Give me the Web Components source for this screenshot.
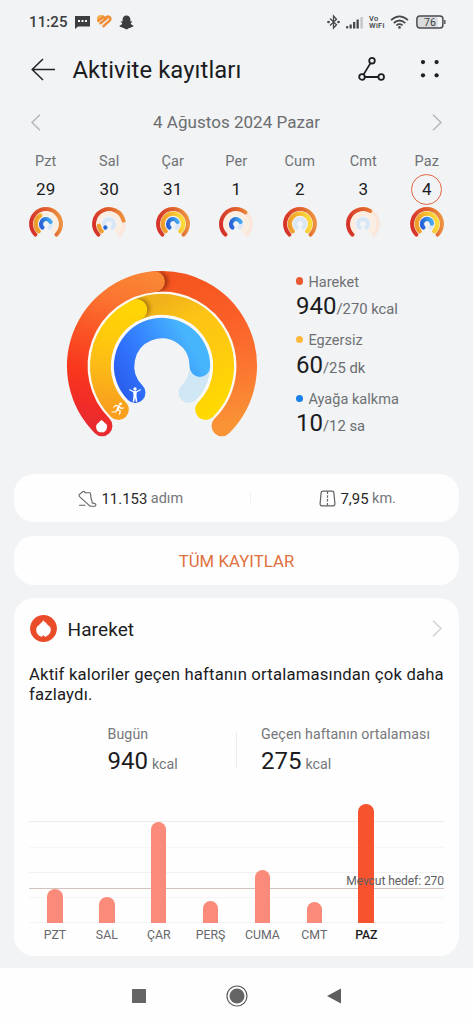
<!DOCTYPE html>
<html lang="tr">
<head>
<meta charset="utf-8">
<title>Aktivite kayıtları</title>
<style>
html,body{margin:0;height:100%}
body{font-family:Roboto,"Open Sans",sans-serif;color:#1b1c1e;background:#f1f3f5;width:473px;height:1024px;overflow:hidden}
</style>
</head>
<body>
<activity-app></activity-app>
<script>
const define=(name,render)=>customElements.define(name,class extends HTMLElement{
  connectedCallback(){
    if(this.shadowRoot)return;
    const t=document.createElement('template');
    t.innerHTML='<style>*{box-sizing:border-box}svg{display:block;flex:none}</style>'+render(this);
    this.attachShadow({mode:'open'}).append(t.content.cloneNode(true));
  }
});

/* Arc drawing: angles in degrees, clockwise from the positive x axis */
const START=135,END=405;
const pt=(c,r,a)=>[c+r*Math.cos(a*Math.PI/180),c+r*Math.sin(a*Math.PI/180)].map(n=>n.toFixed(2)).join(' ');
const arc=(c,r,a,b)=>`M${pt(c,r,a)}A${r} ${r} 0 ${b-a>180?1:0} 1 ${pt(c,r,b)}`;
const stroke=(c,r,a,b,w,col)=>`<path d="${arc(c,r,a,b)}" stroke="${col}" stroke-width="${w}" stroke-linecap="round"/>`;
const grad=(id,[x1,y1,x2,y2],stops)=>`<linearGradient id="${id}" gradientUnits="userSpaceOnUse" x1="${x1}" y1="${y1}" x2="${x2}" y2="${y2}">${stops.map(([o,c])=>`<stop offset="${o}" stop-color="${c}"/>`).join('')}</linearGradient>`;

define('status-bar',()=>`<style>
:host{display:flex;height:44px;padding:0 27px 0 29px;align-items:center;color:#3b3d40}
.t{font-size:15px;font-weight:500;letter-spacing:.1px;width:46px}
.sp{flex:1}.vo{font-size:7.500px;line-height:7px;font-weight:500;letter-spacing:.3px;width:17px;margin:0 4px 0 5px}
</style><span class="t">11:25</span>
<svg width="15" height="14" viewBox="0 0 15 14"><path d="M0 1h15v10.500H3L0 14z" fill="#3b3d40"/><path d="M3 5h2v2H3zM6.500 5h2v2h-2zM10 5h2v2h-2z" fill="#fff"/></svg>
<svg style="margin-left:7px" width="15" height="14" viewBox="0 0 15 14" fill="none" stroke-linecap="round"><path d="M6.800 2.600Q4 -.2 1.700 2.300T1.500 6" stroke="#f3b04f" stroke-width="2.600"/><path d="M1.800 5.200 6.600 1.900M3.500 8.300 10 3M6.500 11.200l5.800-5.400Q14.500 3.500 12.300 2T8.200 3.600" stroke="#f08c35" stroke-width="2.500"/></svg>
<svg style="margin-left:7px" width="15" height="15" viewBox="0 0 15 15" fill="#3b3d40"><path d="M7.500.5C10 .5 11.400 2.200 11.400 4.600v1.800l1.600-.1c.6.600-.2 1.300-1.300 1.700.4 1.300 1.400 2.300 2.800 2.800.1.900-1 1.200-2.200 1.300-.4 1.100-1.200.9-2.300.8-.8.700-1.600 1.300-2.500 1.300s-1.700-.6-2.500-1.300c-1.100.1-1.900.3-2.300-.8C1.500 12 .4 11.700.5 10.800 1.900 10.300 2.900 9.300 3.300 8 2.200 7.600 1.400 6.900 2 6.300l1.600.1V4.600C3.600 2.200 5 .5 7.500.5z"/></svg>
<span class="sp"></span>
<svg width="13" height="16" viewBox="0 0 13 16" fill="none" stroke="#47494c" stroke-width="1.300"><path d="M3 4.500l6.500 6.300L6.500 14V2l3 3.200L3 11.500"/><circle cx="1.500" cy="8" r=".7" fill="#47494c"/><circle cx="11.500" cy="8" r=".7" fill="#47494c"/></svg>
<svg style="margin-left:5px" width="19" height="13" viewBox="0 0 19 13" fill="#47494c"><rect x="1" y="10" width="2.300" height="2.500" rx="1"/><rect x="4.500" y="8.500" width="2.300" height="4"/><rect x="8" y="6" width="2.300" height="6.500"/><rect x="11.500" y="3.500" width="2.300" height="9"/><rect x="15.300" y="1" width="2.600" height="11.500" fill="#c6c8ca"/></svg>
<span class="vo">Vo<br>WiFi</span>
<svg width="19" height="14" viewBox="0 0 19 14" fill="none" stroke="#47494c" stroke-width="1.700"><path d="M1 5.200Q9.500-2.600 18 5.200M3.800 8q5.700-5 11.400 0M6.400 10.400q3.100-2.500 6.200 0"/><circle cx="9.500" cy="12.400" r="1.300" fill="#47494c" stroke="none"/></svg>
<svg style="margin:0 -1px 0 7px" width="31" height="14" viewBox="0 0 31 14"><rect x="1.500" y="1.500" width="20" height="11" fill="#d9dbdd"/><rect x=".9" y=".9" width="26" height="12.200" rx="3" fill="none" stroke="#47494c" stroke-width="1.500"/><path d="M28.200 5h1.300v4h-1.300z" fill="#47494c"/><text x="13.900" y="10.800" font-size="10.500" text-anchor="middle" fill="#3b3d40">76</text></svg>`);

define('title-bar',()=>`<style>
:host{display:flex;height:52px;align-items:center;padding:0 33px 0 31px}
h1{margin:0 0 0 17px;font-size:23.800px;font-weight:400;flex:1;line-height:28px;letter-spacing:.1px}
</style>
<svg width="24.500" height="24" viewBox="0 0 24.500 24" fill="none" stroke="#222" stroke-width="1.500"><path d="M24 11.500H1M12 1 1.200 11.500 12 22" /></svg>
<h1><slot></slot></h1>
<svg style="margin-right:2px" width="28" height="26" viewBox="0 0 28 26" fill="none" stroke="#1d1f21" stroke-width="1.800"><circle cx="15" cy="3.700" r="2.800"/><circle cx="5" cy="20" r="2.800"/><circle cx="24.200" cy="20" r="2.800"/><path d="M13.500 6.100 6.500 17.600M7.800 20h13.600"/></svg>
<svg style="margin-left:33px" width="20" height="20" viewBox="0 0 20 20" fill="#1d1f21"><circle cx="3" cy="2.100" r="2.100"/><circle cx="16.600" cy="2.100" r="2.100"/><circle cx="3" cy="15.300" r="2.100"/><circle cx="16.600" cy="15.300" r="2.100"/></svg>`);

define('chevron-icon',e=>`<style>:host{display:block}</style><svg width="10" height="17" viewBox="0 0 10 17" fill="none" stroke="${e.getAttribute('color')||'#b4b6b8'}" stroke-width="1.500"><path d="${e.hasAttribute('left')?'M9 .8 1 8.500l8 7.700':'M1 .8l8 7.700-8 7.700'}"/></svg>`);

define('date-picker',()=>`<style>
:host{display:flex;height:52px;align-items:center;justify-content:space-between;padding:0 31px}
span{font-size:17px;color:#6b6d70;letter-spacing:.03px}
</style><chevron-icon left></chevron-icon><span><slot></slot></span><chevron-icon></chevron-icon>`);

/* outer / mid / inner hold the end angle of each arc, 0 for none */
define('mini-rings',e=>{
  const g=n=>+e.getAttribute(n);
  const S=[['a',14.900,'#fae7da',[[0,'#d4302a'],[.35,'#dc4d2c'],[.7,'#e2672f'],[1,'#ec9040']],g('outer'),4],
           ['b',10.300,'#fbeee0',[[0,'#ef9a2c'],[.5,'#f5b62c'],[1,'#fadb3a']],g('mid'),4.300],
           ['c',5,'#d9e6f5',[[0,'#2c5fd8'],[.5,'#2f83dc'],[1,'#45a6ee']],g('inner'),4.200]];
  return `<style>:host{display:block}</style><svg width="34" height="34" viewBox="0 0 34 34" fill="none"><defs>${S.map(([id,r,,st])=>grad(id,[17-r,17+r*.4,17+r,17],st)).join('')}</defs>`+
    S.map(([id,r,bg,st,end,w])=>stroke(17,r,START,END,w,bg)+(end?stroke(17,r,START,end,w,`url(#${id})`):'')).join('')+`</svg>`;
});

define('week-day',e=>`<style>
:host{display:flex;flex-direction:column;align-items:center}
.d{font-size:14.500px;line-height:18px;color:#6f7174;letter-spacing:.1px}
.n{font-size:17px;width:31px;height:31px;margin:2.500px 0 2.500px;display:flex;align-items:center;justify-content:center;border-radius:50%;border:1.500px solid transparent;letter-spacing:.1px}
:host([selected]) .n{border-color:#e2683f}
</style><span class="d">${e.getAttribute('day')}</span><span class="n">${e.getAttribute('num')}</span>
<mini-rings outer="${e.getAttribute('o')}" mid="${e.getAttribute('m')}" inner="${e.getAttribute('i')}"></mini-rings>`);

define('week-strip',()=>`<style>
:host{display:grid;grid-template-columns:repeat(7,63.500px);padding:5px 0 0 14px;height:113px}
</style>
<week-day day="Pzt" num="29" o="405" m="236" i="335"></week-day>
<week-day day="Sal" num="30" o="347" m="170" i="136"></week-day>
<week-day day="Çar" num="31" o="405" m="405" i="335"></week-day>
<week-day day="Per" num="1" o="309" m="0" i="335"></week-day>
<week-day day="Cum" num="2" o="405" m="405" i="0"></week-day>
<week-day day="Cmt" num="3" o="299" m="0" i="0"></week-day>
<week-day day="Paz" num="4" selected o="405" m="405" i="355"></week-day>`);

define('activity-rings',()=>{
  const c=100;
  const band=(id,ro,ri)=>`<clipPath id="${id}"><path clip-rule="evenodd" d="M${c-ro} ${c}a${ro} ${ro} 0 0 1 ${2*ro} 0zM${c-ri} ${c}a${ri} ${ri} 0 0 1 ${2*ri} 0z"/></clipPath>`;
  const shade=(r,a,col,clip)=>{const [x,y]=pt(c,r,a).split(' ');return `<g clip-path="url(#${clip})"><circle cx="${x}" cy="${y}" r="10" fill="${col}" filter="url(#sh)"/></g>`};
  return `<style>:host{display:block}</style>
<svg width="200" height="200" viewBox="0 0 200 200" fill="none">
<defs><filter id="sh" x="-50%" y="-50%" width="200%" height="200%"><feGaussianBlur stdDeviation="2"/></filter>
${band('o',95,74.4)}${band('m',72,51.2)}
${grad('or',[110,8,150,165],[[0,'#f4541f'],[.35,'#fb5f28'],[.7,'#fb7831'],[1,'#f99436']])}
${grad('ol',[92,10,40,165],[[0,'#f98735'],[.22,'#fb7430'],[.45,'#fa5425'],[.7,'#f8361d'],[.88,'#f02c28'],[1,'#e72a30']])}
${grad('mr',[90,40,150,145],[[0,'#f0b21a'],[.25,'#fcc415'],[.6,'#fecb0e'],[1,'#ffd900']])}
${grad('ml',[80,42,60,145],[[0,'#ffd604'],[.35,'#fec90c'],[.6,'#fcbb16'],[1,'#f99f1e']])}
${grad('in',[66,130,136,90],[[0,'#2b61ee'],[.25,'#2f70fb'],[.6,'#388eff'],[1,'#47b5fc']])}
</defs>
<path d="${arc(c,73.200,START,END)}" stroke="#fdf8f0" stroke-width="3"/><path d="${arc(c,49.600,START,END)}" stroke="#fbfaf5" stroke-width="3.500"/>
${stroke(c,84.700,262,END,20.600,'url(#or)')}
${shade(84.700,267.5,'#a3320f','o')}
${stroke(c,84.700,START,265,20.600,'url(#ol)')}
${stroke(c,61.600,244,END,20.800,'url(#mr)')}
${shade(61.600,249,'#a9770c','m')}
${stroke(c,61.600,START,246,20.800,'url(#ml)')}
${stroke(c,37.900,340,END,20.500,'#d0e7f5')}
${stroke(c,37.900,START,361,20.500,'url(#in)')}
<path fill="#fff" d="M39.500 153.800c1 1.600 2.400 1.700 3 2.900 1.700.7 2.600 2 2.600 3.900 0 2.600-1.400 4.600-3.400 5.600l-1.700.2-.5-1-.6 1-1.800-.3c-1.800-1-3-2.900-3-5.300 0-1.900.9-3.300 2.400-3.900.6-1.400 2.100-1.600 3-3.100z"/>
<circle cx="73" cy="123" r="1.700" fill="#fff"/><path d="M67.800 123.800l3.600 2h3.200l3.800-2" stroke="#fff" stroke-width="1.200" stroke-linecap="round" stroke-linejoin="round"/><path d="M71.200 125.200h3.600l-.3 4.800.8 5.800h-1.500l-.8-4.300-.8 4.300h-1.500l.8-5.800z" fill="#fff"/>
<circle cx="58.500" cy="137.800" r="1.400" fill="#fff"/><path d="M57 140.300l-1.500 3.300" stroke="#fff" stroke-width="2.200" stroke-linecap="round"/><path d="M57 140l-3.200-.6-2 1.700M55.500 143.500l2.800 1.600-.7 3M55.200 144l-1.600 1.900-3.600.1M57.300 140.500l1.800 2 2.200-.6" stroke="#fff" stroke-width="1.200" stroke-linecap="round" stroke-linejoin="round"/>
</svg>`});

define('ring-stat',e=>`<style>
:host{display:block;height:58.700px}
.l{display:flex;align-items:center;height:20px;font-size:14.500px;color:#6f7174;letter-spacing:.03px}
.l i{width:7.400px;height:7.400px;border-radius:50%;background:${e.getAttribute('color')};margin-right:5px;position:relative;top:-1px}
.v{font-size:24px;line-height:28px;white-space:nowrap}
.v small{font-size:14.800px;color:#6b6d70;letter-spacing:0}
</style><div class="l"><i></i>${e.getAttribute('label')}</div><div class="v">${e.getAttribute('value')}<small>/<slot></slot></small></div>`);

define('activity-summary',()=>`<style>
:host{display:flex;height:213px;padding:5px 0 0 62px}
.s{padding-top:6px;margin-left:34px}
</style><activity-rings></activity-rings><div class="s">
<ring-stat color="#e95a33" label="Hareket" value="940">270 kcal</ring-stat>
<ring-stat color="#fbb83a" label="Egzersiz" value="60">25 dk</ring-stat>
<ring-stat color="#1880e6" label="Ayağa kalkma" value="10">12 sa</ring-stat></div>`);

define('app-card',()=>`<style>:host{display:block;background:#fefefe;border-radius:20px;margin:0 14px}</style><slot></slot>`);

define('step-totals',()=>`<style>
:host{display:flex;height:48px;align-items:center}
div{display:flex;align-items:center;font-size:14.900px;color:#26282a;flex:none;padding-top:1px}
.steps{padding-left:64px;width:236px}.km{padding-left:68px}
small{font-size:14.500px;color:#747679;margin-left:3.500px}
i{width:1px;height:11px;background:#f1f1f2}
svg{margin-right:4.500px}
</style>
<div class="steps"><svg width="19" height="18" viewBox="0 0 19 18" fill="none" stroke="#5f6164" stroke-width="1.100" stroke-linejoin="round" stroke-linecap="round"><path d="M1.300 6.300c-.6-.9-.2-1.500.5-2.100L5 1.500c1-.7 1.500.1 1.900.9.700.8 1.500.3 2.500.3h2.300c1 .2 1 1.300 1 2.200 0 2.500.3 4.600 1.300 6.100.2.700-.2 1.200.2 1.900l3 .9c1 .6.900 2.300-.4 2.500h-3.600c-1.200-.1-2-.9-2.900-1.700z"/><path d="M1.500 15.300h5.500"/></svg><span>11.153</span><small>adım</small></div><i></i>
<div class="km"><svg width="17" height="17" viewBox="0 0 17 17" fill="none" stroke="#5f6164" stroke-width="1.200"><path d="M4 1.200h9c1.200 0 1.800.6 1.900 1.700l1 10.700c.1 1.500-.7 2.200-1.900 2.200H3c-1.200 0-2-.7-1.900-2.200l1-10.700c.1-1.100.7-1.700 1.900-1.700z"/><path d="M8.500 1.500v14" stroke-dasharray="2.500 1.300"/></svg><span>7,95</span><small>km.</small></div>`);

define('all-records',()=>`<style>:host{display:flex;height:49px;align-items:center;justify-content:center;font-size:16.700px;letter-spacing:.08px;color:#e0703d;padding-top:2px}</style><slot></slot>`);

define('card-head',()=>`<style>
:host{display:flex;align-items:center;height:60px;padding:0 17px 0 15.500px}
h2{margin:2px 0 0 11px;font-size:19px;font-weight:400;flex:1;letter-spacing:.1px}
</style><svg width="27" height="27" viewBox="0 0 27 27"><circle cx="13.500" cy="13.500" r="13.400" fill="#ea4c2a"/><path d="M13.300 5.200c1.700 2.600 3.600 2.800 4.400 4.700 2.200 1 3.200 2.800 3.100 5.200-.2 3-2 5.300-4.800 6.400-.8.300-1.400.2-1.700-.3l-.9-1.300-.9 1.300c-.3.500-.9.600-1.700.2-2.700-1.100-4.500-3.300-4.600-6.200-.1-2.500 1-4.200 2.700-5 1-2 3.200-2.500 4.400-5z" fill="#fff"/></svg>
<h2><slot></slot></h2><chevron-icon color="#cfd0d2"></chevron-icon>`);

define('kcal-value',e=>`<style>
:host{display:block}.l{font-size:14.200px;line-height:20px;color:#75777a;letter-spacing:.09px;white-space:nowrap}
.v{font-size:24px;line-height:28px;margin-top:3px}.v small{font-size:14.300px;color:#75777a;margin-left:4px;letter-spacing:0}
</style><div class="l"><slot></slot></div><div class="v">${e.getAttribute('value')}<small>kcal</small></div>`);

define('week-chart',()=>{
  const bars=[['PZT',34.500],['SAL',26.500],['ÇAR',101.300],['PERŞ',22],['CUMA',53],['CMT',21],['PAZ',119]];
  return `<style>
:host{display:block;margin:0 15px}
.plot{position:relative;display:grid;grid-template-columns:repeat(8,1fr);height:120px;align-items:end;justify-items:center;
 background:linear-gradient(#d3c1bd,#d3c1bd) 0 85px/100% 1px no-repeat,linear-gradient(#ececed,#ececed) 0 18px/100% 1px no-repeat,linear-gradient(#f6f6f7,#f6f6f7) 0 44px/100% 1px no-repeat,linear-gradient(#f1f1f2,#f1f1f2) 0 69px/100% 1px no-repeat,linear-gradient(#f5f5f6,#f5f5f6) 0 94px/100% 1px no-repeat,linear-gradient(#f5f5f6,#f5f5f6) 0 119px/100% 1px no-repeat}
.plot b{width:15.600px;background:#fa8b7a;border-radius:8px 8px 0 0}
.plot b.on{background:#f6532e}
.goal{position:absolute;right:0;top:71px;font-size:12.100px;line-height:15px;letter-spacing:-.1px;color:#5f6063}
.x{display:grid;grid-template-columns:repeat(8,1fr);justify-items:center;font-size:12.300px;line-height:16px;margin-top:4px;color:#66686b}
.x .on{color:#1b1c1e;font-weight:500;letter-spacing:-.2px}
</style><div class="plot">${bars.map(([n,h])=>`<b class="${n=='PAZ'?'on':''}" style="height:${h}px"></b>`).join('')}<div class="goal">Mevcut hedef: 270</div></div>
<div class="x">${bars.map(([n])=>`<span class="${n=='PAZ'?'on':''}">${n}</span>`).join('')}</div>`});

define('move-card',()=>`<style>
:host{display:block;height:358px}
p{margin:7px 12px 0 15px;font-size:16.700px;line-height:20px;letter-spacing:.18px}
.c{display:flex;margin:19px 0 0 93.500px;height:79px}
.c i{width:1px;height:36px;background:#ececed;margin:8px 24px 0 0}
.c kcal-value:first-child{width:128.500px}
</style><card-head>Hareket</card-head>
<p>Aktif kaloriler geçen haftanın ortalamasından çok daha fazlaydı.</p>
<div class="c"><kcal-value value="940">Bugün</kcal-value><i></i><kcal-value value="275">Geçen haftanın ortalaması</kcal-value></div>
<week-chart></week-chart>`);

define('nav-bar',()=>`<style>:host{display:flex;height:56px;background:#fefefe;align-items:center;justify-content:center;gap:80.500px;margin-top:auto}</style>
<svg width="14" height="14"><rect width="14" height="14" rx=".5" fill="#656565"/></svg>
<svg width="22" height="22" style="margin:0 -1px"><circle cx="11" cy="11" r="10" fill="none" stroke="#5c5c5c" stroke-width="1.200"/><circle cx="11" cy="11" r="7.500" fill="#656565"/></svg>
<svg width="14" height="16"><path d="M0 8 14 .5v15z" fill="#5f5f5f"/></svg>`);

define('activity-app',()=>`<style>:host{display:flex;flex-direction:column;height:1024px;width:473px}
.cards{display:flex;flex-direction:column;gap:13.500px}</style>
<status-bar></status-bar>
<title-bar>Aktivite kayıtları</title-bar>
<date-picker>4 Ağustos 2024 Pazar</date-picker>
<week-strip></week-strip>
<activity-summary></activity-summary>
<div class="cards">
<app-card><step-totals></step-totals></app-card>
<app-card><all-records>TÜM KAYITLAR</all-records></app-card>
<app-card><move-card></move-card></app-card>
</div>
<nav-bar></nav-bar>`);
</script>
</body>
</html>
